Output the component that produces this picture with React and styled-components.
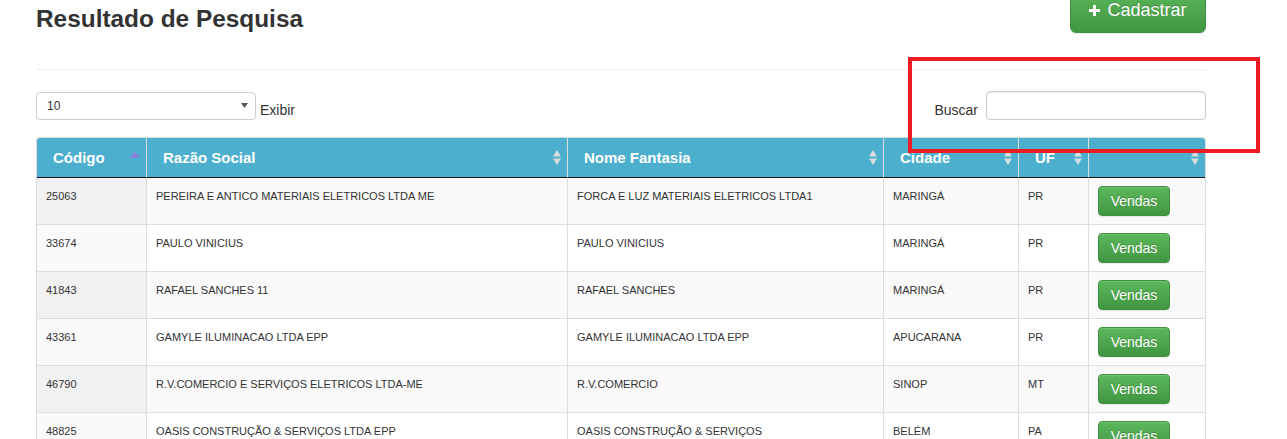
import React from "react";
import styled, { createGlobalStyle } from "styled-components";

const GlobalStyle = createGlobalStyle`
  html, body { margin: 0; padding: 0; background: #fff; }
  body {
    font-family: "Liberation Sans", Arial, Helvetica, sans-serif;
    color: #333;
    overflow: hidden;
  }
  * { box-sizing: border-box; }
`;

const Root = styled.div`
  position: relative;
  height: 439px;
  overflow: hidden;
  display: flow-root;
`;

const Page = styled.div`
  width: 1170px;
  margin: -13px 0 0 36px;
`;

const Header = styled.div`
  display: flex;
  justify-content: space-between;
  align-items: flex-start;
`;

const Title = styled.h1`
  margin: 18px 0 0;
  font-size: 24.4px;
  line-height: 27px;
  font-weight: bold;
  color: #333;
`;

const SuccessButton = styled.button`
  display: flex;
  align-items: center;
  justify-content: center;
  gap: ${(p) => (p.$large ? "7px" : "0")};
  width: ${(p) => (p.$large ? "136px" : "72px")};
  height: ${(p) => (p.$large ? "46px" : "30px")};
  padding: 0;
  margin: 0;
  font-family: inherit;
  font-size: ${(p) => (p.$large ? "18px" : "14px")};
  color: #fff;
  text-shadow: 0 -1px 0 rgba(0, 0, 0, 0.2);
  background: linear-gradient(to bottom, #5cb85c 0%, #419641 100%);
  border: 1px solid #3e8f3e;
  border-radius: ${(p) => (p.$large ? "6px" : "4px")};
  box-shadow: inset 0 1px 0 rgba(255, 255, 255, 0.15), 0 1px 1px rgba(0, 0, 0, 0.075);
  cursor: pointer;
`;

const Rule = styled.hr`
  margin: 36px 0 0;
  border: 0;
  border-top: 1px solid #eee;
  height: 0;
`;

const Controls = styled.div`
  margin-top: 21px;
  height: 29px;
  display: flex;
  justify-content: space-between;
  align-items: flex-end;
`;

const Group = styled.div`
  display: flex;
  align-items: flex-end;
  gap: ${(p) => p.$gap || "4px"};
`;

const SelectBox = styled.div`
  width: 220px;
  height: 28px;
  border: 1px solid #ccc;
  border-radius: 4px;
  background: #fff;
  display: flex;
  align-items: center;
  justify-content: space-between;
  padding: 0 7px 0 10px;
  font-size: 12px;
  color: #333;
`;

const Label = styled.span`
  font-size: 14px;
  line-height: 20px;
  color: #333;
`;

const SearchInput = styled.input`
  width: 220px;
  height: 29px;
  border: 1px solid #ccc;
  border-radius: 4px;
  padding: 0 8px;
  font-family: inherit;
  font-size: 12px;
  box-shadow: inset 0 1px 1px rgba(0, 0, 0, 0.075);
  outline: none;
`;

const Table = styled.table`
  margin-top: 17px;
  width: 1170px;
  table-layout: fixed;
  border-collapse: separate;
  border-spacing: 0;
  border: 1px solid #ddd;
  border-bottom: 0;
  border-radius: 4px 4px 0 0;
  overflow: hidden;
`;

const Th = styled.th`
  height: 40px;
  padding: 0 6px 0 16px;
  background: #4bafcd;
  color: #fff;
  font-size: 15px;
  line-height: 20px;
  font-weight: bold;
  text-align: left;
  vertical-align: middle;
  border-bottom: 1px solid #111;
  border-left: ${(p) => (p.$first ? "0" : "1px solid #ddd")};
`;

const ThInner = styled.div`
  display: flex;
  align-items: center;
  justify-content: space-between;
`;

const Row = styled.tr`
  background: ${(p) => (p.$odd ? "#f9f9f9" : "#fff")};
`;

const Td = styled.td`
  padding: 8px 9px;
  font-size: 11px;
  line-height: 20px;
  color: #333;
  vertical-align: top;
  border-top: ${(p) => (p.$topBorder ? "1px solid #ddd" : "0")};
  border-left: ${(p) => (p.$first ? "0" : "1px solid #ddd")};
  background: ${(p) => (p.$sorted ? (p.$odd ? "#f1f1f1" : "#fafafa") : "transparent")};
  white-space: nowrap;
  overflow: hidden;
`;

const Annotation = styled.div`
  position: absolute;
  left: 908px;
  top: 57px;
  width: 352px;
  height: 96px;
  border: 4px solid #ed1c24;
  pointer-events: none;
`;

const PlusIcon = () => (
  <svg width="11" height="11" viewBox="0 0 11 11">
    <rect x="4" y="0" width="3" height="11" fill="#fff" />
    <rect x="0" y="4" width="11" height="3" fill="#fff" />
  </svg>
);

const CaretDown = () => (
  <svg width="7" height="6" viewBox="0 0 7 6">
    <polygon points="0,0 7,0 3.5,5" fill="#555" />
  </svg>
);

const SortBoth = () => (
  <svg width="8" height="15" viewBox="0 0 8 15">
    <polygon points="4,0 8,6.5 0,6.5" fill="#d9dde0" />
    <polygon points="0,8.5 8,8.5 4,15" fill="#d9dde0" />
  </svg>
);

const SortAsc = () => (
  <svg width="10" height="15" viewBox="0 0 10 15">
    <polygon points="5,1.5 10,8 0,8" fill="#8a80dc" />
  </svg>
);

const columns = [
  { title: "Código", width: 109, asc: true },
  { title: "Razão Social", width: 421 },
  { title: "Nome Fantasia", width: 316 },
  { title: "Cidade", width: 135 },
  { title: "UF", width: 70 },
  { title: "", width: 117 },
];

const rows = [
  ["25063", "PEREIRA E ANTICO MATERIAIS ELETRICOS LTDA ME", "FORCA E LUZ MATERIAIS ELETRICOS LTDA1", "MARINGÁ", "PR"],
  ["33674", "PAULO VINICIUS", "PAULO VINICIUS", "MARINGÁ", "PR"],
  ["41843", "RAFAEL SANCHES 11", "RAFAEL SANCHES", "MARINGÁ", "PR"],
  ["43361", "GAMYLE ILUMINACAO LTDA EPP", "GAMYLE ILUMINACAO LTDA EPP", "APUCARANA", "PR"],
  ["46790", "R.V.COMERCIO E SERVIÇOS ELETRICOS LTDA-ME", "R.V.COMERCIO", "SINOP", "MT"],
  ["48825", "OASIS CONSTRUÇÃO & SERVIÇOS LTDA EPP", "OASIS CONSTRUÇÃO & SERVIÇOS", "BELÉM", "PA"],
];

export default function App() {
  return (
    <Root>
      <GlobalStyle />
      <Page>
        <Header>
          <Title>Resultado de Pesquisa</Title>
          <SuccessButton $large>
            <PlusIcon />
            <span>Cadastrar</span>
          </SuccessButton>
        </Header>
        <Rule />
        <Controls>
          <Group>
            <SelectBox>
              <span>10</span>
              <CaretDown />
            </SelectBox>
            <Label>Exibir</Label>
          </Group>
          <Group $gap="8px">
            <Label>Buscar</Label>
            <SearchInput type="text" />
          </Group>
        </Controls>
        <Table>
          <colgroup>
            {columns.map((c, i) => (
              <col key={i} style={{ width: c.width }} />
            ))}
          </colgroup>
          <thead>
            <tr>
              {columns.map((c, i) => (
                <Th key={i} $first={i === 0}>
                  <ThInner>
                    <span>{c.title}</span>
                    {c.asc ? <SortAsc /> : <SortBoth />}
                  </ThInner>
                </Th>
              ))}
            </tr>
          </thead>
          <tbody>
            {rows.map((r, ri) => {
              const odd = ri % 2 === 0;
              return (
                <Row key={ri} $odd={odd}>
                  {r.map((v, ci) => (
                    <Td key={ci} $first={ci === 0} $sorted={ci === 0} $odd={odd} $topBorder={ri > 0}>
                      {v}
                    </Td>
                  ))}
                  <Td $odd={odd} $topBorder={ri > 0}>
                    <SuccessButton>Vendas</SuccessButton>
                  </Td>
                </Row>
              );
            })}
          </tbody>
        </Table>
      </Page>
      <Annotation />
    </Root>
  );
}
